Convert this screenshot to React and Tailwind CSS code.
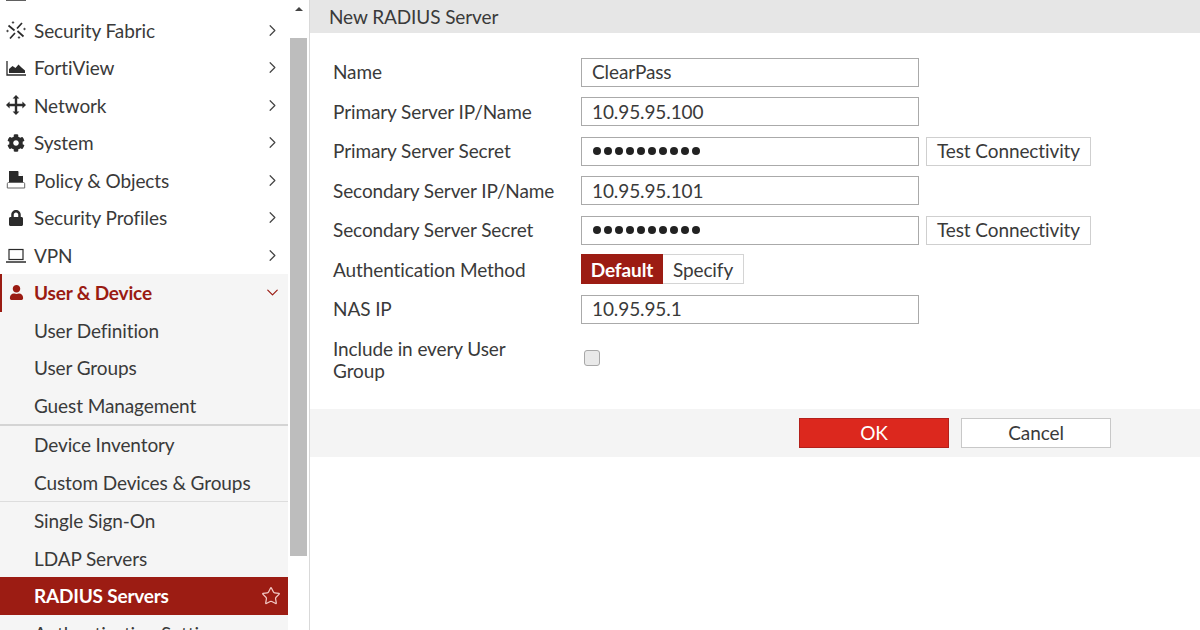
import React from "react";
import { ChevronRight, ChevronDown, Star } from "lucide-react";
import { FaCog, FaLock, FaUser } from "react-icons/fa";

const FabricIcon = () => (
  <svg width="20" height="20" viewBox="0 0 20 20" fill="#2b2b2b" stroke="#2b2b2b" strokeWidth="1.7">
    <path d="M2.5 5.5 8.5 10.5M11 8.5 16 3M11.5 11 17.5 16.5M9 13 4 18.5" fill="none" />
    <circle cx="7" cy="2.5" r="0.8" strokeWidth="0.6" />
    <circle cx="1.5" cy="11" r="0.8" strokeWidth="0.6" />
    <circle cx="18.5" cy="9" r="0.8" strokeWidth="0.6" />
    <circle cx="13" cy="17.5" r="0.8" strokeWidth="0.6" />
  </svg>
);
const ViewIcon = () => (
  <svg width="20" height="20" viewBox="0 0 20 20">
    <path d="M1 3v14h19" fill="none" stroke="#2b2b2b" strokeWidth="1.3" />
    <path d="M3 15V11l3.5-3 3 2 3-3.5 3 3 3.5 3V15z" fill="#2b2b2b" />
  </svg>
);
const MoveIcon = () => (
  <svg width="20" height="20" viewBox="0 0 20 20" fill="#2b2b2b">
    <path d="M10 0l3.4 3.6h-2.2v5.2h5.2V6.6L20 10l-3.6 3.4v-2.2h-5.2v5.2h2.2L10 20l-3.4-3.6h2.2v-5.2H3.6v2.2L0 10l3.6-3.4v2.2h5.2V3.6H6.6z" />
  </svg>
);
const PolicyIcon = () => (
  <svg width="20" height="20" viewBox="0 0 20 20">
    <path d="M3 1h9l5 5v5H3z" fill="#2b2b2b" />
    <path d="M12.5 1v5h5z" fill="#fff" />
    <path d="M2.5 12.5h15c.7 0 1.2.5 1.2 1.2V18H1.3v-4.3c0-.7.5-1.2 1.2-1.2z" fill="#fff" stroke="#666" strokeWidth="1" />
    <path d="M3 9h14v3H3z" fill="#2b2b2b" />
  </svg>
);
const LaptopIcon = () => (
  <svg width="20" height="20" viewBox="0 0 20 20" fill="none" stroke="#2b2b2b">
    <rect x="3" y="4.5" width="14" height="10" strokeWidth="1.2" />
    <path d="M0 17h20" strokeWidth="1.5" />
  </svg>
);

const G = ({ children }) => <span className="w-[20px] h-[20px] flex items-center justify-center shrink-0">{children}</span>;

const top = [
  ["Security Fabric", <FabricIcon />],
  ["FortiView", <ViewIcon />],
  ["Network", <MoveIcon />],
  ["System", <FaCog size={18} color="#2b2b2b" />],
  ["Policy & Objects", <PolicyIcon />],
  ["Security Profiles", <FaLock size={16} color="#2b2b2b" />],
  ["VPN", <LaptopIcon />],
];

const Row = ({ icon, label }) => (
  <div className="h-[37.5px] flex items-center pl-[6px] pr-[6px] text-[#3a3a3a]">
    <G>{icon}</G>
    <span className="ml-[8px] flex-1 whitespace-nowrap">{label}</span>
    <ChevronRight size={19} color="#444444" strokeWidth={1.5} />
  </div>
);

const Sub = ({ label }) => (
  <div className="h-[37.5px] flex items-center pl-[34px] text-[#3a3a3a] whitespace-nowrap">{label}</div>
);

const Field = ({ label, children }) => (
  <div className="flex h-[39.5px] items-center">
    <div className="w-[248px] text-[#3a3a3a] whitespace-nowrap">{label}</div>
    {children}
  </div>
);

const Input = ({ value, dots }) => (
  <div className="w-[338px] h-[29px] mt-[1px] pb-[1px] border border-[#aaaaaa] bg-white pl-[10px] flex items-center text-[#3a3a3a] shrink-0">
    {dots ? (
      <span className="flex gap-[3px] pl-[1px]">
        {Array.from({ length: 10 }, (_, i) => (
          <span key={i} className="w-[8px] h-[8px] rounded-full bg-[#222222]" />
        ))}
      </span>
    ) : value}
  </div>
);

const TestBtn = () => (
  <div className="ml-[7px] w-[165px] h-[29px] mt-[1px] pb-[1px] border border-[#cfcfcf] bg-white flex items-center justify-center text-[#3a3a3a] whitespace-nowrap">
    Test Connectivity
  </div>
);

export default function App() {
  return (
    <div className="w-[1200px] h-[630px] overflow-hidden flex bg-white text-[19px] leading-none tracking-[-0.1px] font-['Lato','Open_Sans',sans-serif]">
      <aside className="w-[288px] h-[630px] overflow-hidden shrink-0">
        <div className="-mt-[26px]">
          <div className="h-[37.5px] flex items-center pl-[6px]"><G><LaptopIcon /></G></div>
          {top.map(([label, icon]) => <Row key={label} icon={icon} label={label} />)}
          <div className="bg-[#f5f5f5]">
            <div className="h-[37.5px] flex items-center pl-[4px] pr-[6px] text-[#9a1b12] font-bold tracking-[-0.17px] border-l-2 border-[#9a1b12]">
              <span className="w-[20px] flex justify-center"><FaUser size={15} color="#9a1b12" /></span>
              <span className="ml-[8px] flex-1 whitespace-nowrap">User &amp; Device</span>
              <ChevronDown size={19} color="#9a1b12" strokeWidth={1.5} />
            </div>
            <Sub label="User Definition" />
            <Sub label="User Groups" />
            <Sub label="Guest Management" />
            <div className="h-[2px] bg-[#d4d4d4]" />
            <Sub label="Device Inventory" />
            <Sub label="Custom Devices & Groups" />
            <div className="h-px bg-[#dddddd]" />
            <Sub label="Single Sign-On" />
            <Sub label="LDAP Servers" />
            <div className="h-[37.5px] flex items-center pl-[34px] pr-[7px] bg-[#9c1c13] text-white font-bold tracking-[-0.2px]">
              <span className="flex-1 whitespace-nowrap">RADIUS Servers</span>
              <Star size={20} color="#f2c9c5" strokeWidth={1.5} />
            </div>
            <Sub label="Authentication Settings" />
          </div>
        </div>
      </aside>

      <div className="w-[22px] h-[630px] shrink-0 flex flex-col border-r border-[#d9d9d9] pr-[2px] pl-[2px]">
        <div className="h-[38px] flex justify-center pt-[7px] bg-white">
          <span className="w-0 h-0 border-x-[4px] border-x-transparent border-b-[4px] border-b-[#444444]" />
        </div>
        <div className="h-[518px] bg-[#bdbdbd]" />
      </div>

      <main className="flex-1 flex flex-col min-w-0">
        <header className="h-[33px] bg-[#e6e6e6] pl-[19px] pb-[1px] flex items-center text-[#3a3a3a]">New RADIUS Server</header>
        <div className="pl-[23px] pt-[19px] h-[376px]">
          <Field label="Name"><Input value="ClearPass" /></Field>
          <Field label="Primary Server IP/Name"><Input value="10.95.95.100" /></Field>
          <Field label="Primary Server Secret"><Input dots /><TestBtn /></Field>
          <Field label="Secondary Server IP/Name"><Input value="10.95.95.101" /></Field>
          <Field label="Secondary Server Secret"><Input dots /><TestBtn /></Field>
          <Field label="Authentication Method">
            <div className="flex h-[30px]">
              <div className="w-[82px] bg-[#9c1c13] text-white font-bold flex items-center justify-center">Default</div>
              <div className="w-[81px] border border-[#d4d4d4] border-l-0 text-[#3a3a3a] flex items-center justify-center">Specify</div>
            </div>
          </Field>
          <Field label="NAS IP"><Input value="10.95.95.1" /></Field>
          <div className="flex mt-[9px]">
            <div className="w-[248px] text-[#3a3a3a] leading-[22px]">Include in every User<br />Group</div>
            <div className="ml-[3px] mt-[12px] w-[16px] h-[16px] rounded-[3px] border border-[#a8a8a8] bg-[#e9e9e9]" />
          </div>
        </div>
        <div className="h-[48px] bg-[#f4f4f4] flex items-center pl-[489px] gap-[12px]">
          <div className="w-[150px] h-[30px] bg-[#dc281e] border border-[#b3201a] text-white flex items-center justify-center pb-[1px]">OK</div>
          <div className="w-[150px] h-[30px] bg-white border border-[#c8c8c8] text-[#3a3a3a] flex items-center justify-center pb-[1px]">Cancel</div>
        </div>
      </main>
    </div>
  );
}
